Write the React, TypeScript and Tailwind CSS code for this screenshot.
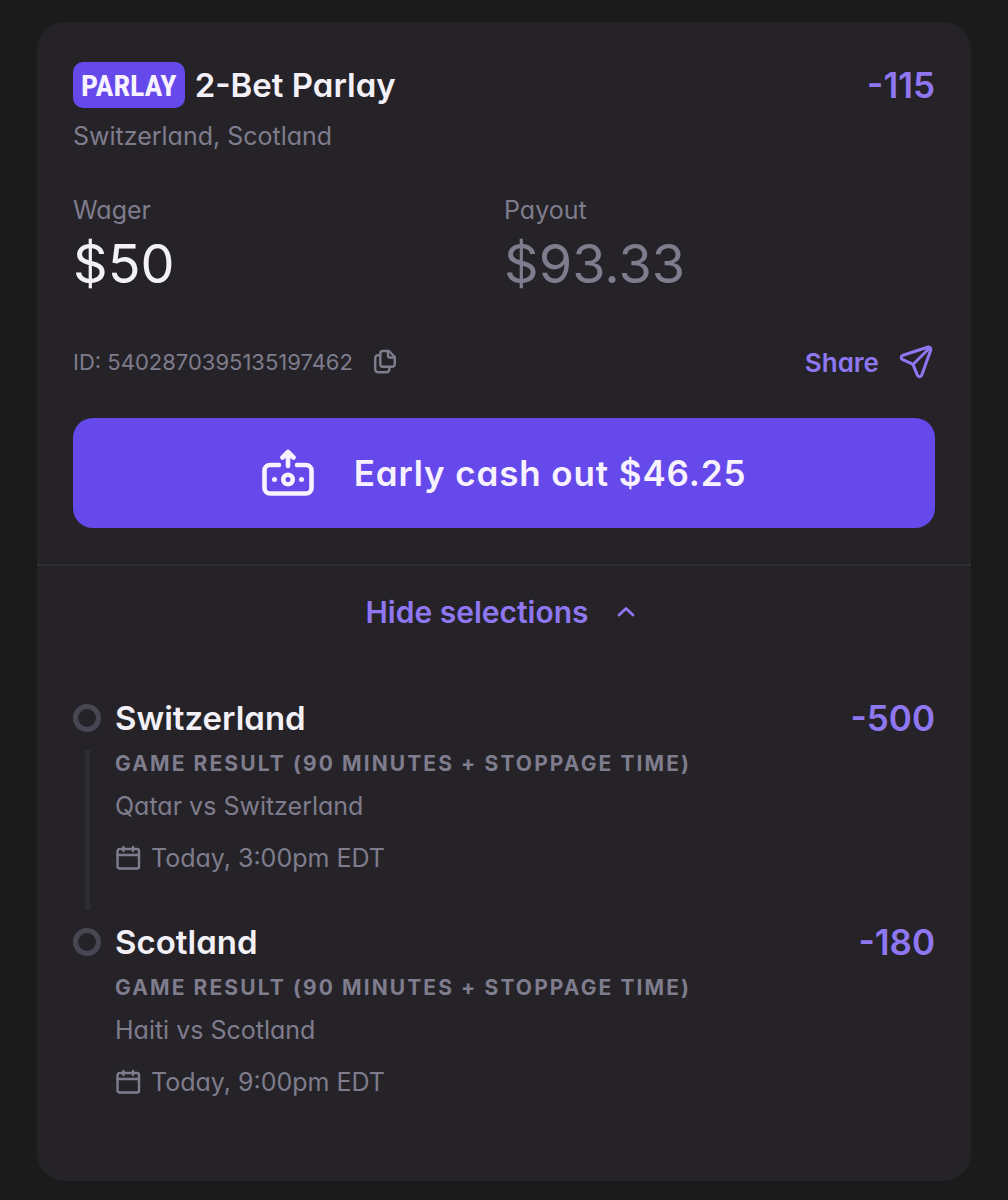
import React from "react";

type Selection = {
  name: string;
  odds: string;
  match: string;
  time: string;
};

const selections: Selection[] = [
  { name: "Switzerland", odds: "-500", match: "Qatar vs Switzerland", time: "Today, 3:00pm EDT" },
  { name: "Scotland", odds: "-180", match: "Haiti vs Scotland", time: "Today, 9:00pm EDT" },
];

function CopyIcon() {
  return (
    <svg width="24" height="26" viewBox="0 0 24 26" fill="none" stroke="currentColor" strokeWidth="2.4" strokeLinejoin="round" strokeLinecap="round" aria-hidden="true">
      <path d="M9.8 2H16L21.800 8V15.200A2.500 2.500 0 0 1 19.300 17.700H9.800A2.500 2.500 0 0 1 7.300 15.200V4.500A2.500 2.500 0 0 1 9.800 2Z" />
      <path d="M15 2.400V6.500A2 2 0 0 0 17 8.500H21.400" />
      <path d="M7.300 6.300H5A2.800 2.800 0 0 0 2.200 9.100V20.400A2.800 2.800 0 0 0 5 23.200H13.500A2.800 2.800 0 0 0 16.300 20.400V17.700" />
    </svg>
  );
}

function ShareIcon() {
  return (
    <svg width="36" height="34" viewBox="0 0 36 34" fill="none" stroke="currentColor" strokeWidth="3" strokeLinejoin="round" strokeLinecap="round" aria-hidden="true">
      <path d="M28.500 2.200L4 10.200C1.600 11.100 1.600 13.700 3.800 14.700L12.500 18.600C13.400 19 14 19.500 14.300 20.400L18.400 30.200C19.300 32.300 22 32.300 22.800 30.100L31.700 5.200C32.300 3.200 30.500 1.500 28.500 2.200Z" />
      <path d="M14.200 19.300L30.600 3" />
    </svg>
  );
}

function CashOutIcon() {
  return (
    <svg width="52" height="48" viewBox="0 0 52 48" fill="none" stroke="currentColor" strokeWidth="4.600" strokeLinejoin="round" strokeLinecap="round" aria-hidden="true">
      <path d="M17 16H8A5.500 5.500 0 0 0 2.500 21.500V39A5.500 5.500 0 0 0 8 44.500H44A5.500 5.500 0 0 0 49.500 39V21.500A5.500 5.500 0 0 0 44 16H35" />
      <path d="M26 17V4M20.500 8.500L26 3L31.500 8.500" />
      <circle cx="26" cy="30.500" r="4.800" />
      <circle cx="12.500" cy="30.500" r="2.500" fill="currentColor" stroke="none" />
      <circle cx="39.500" cy="30.500" r="2.500" fill="currentColor" stroke="none" />
    </svg>
  );
}

function ChevronUpIcon() {
  return (
    <svg width="18" height="12" viewBox="0 0 18 12" fill="none" stroke="currentColor" strokeWidth="2.800" strokeLinejoin="round" strokeLinecap="round" aria-hidden="true">
      <path d="M2 9L9 2.500L16 9" />
    </svg>
  );
}

function CalendarIcon() {
  return (
    <svg width="26" height="26" viewBox="0 0 26 26" fill="none" stroke="currentColor" strokeWidth="2.400" strokeLinejoin="round" strokeLinecap="round" aria-hidden="true">
      <rect x="2.500" y="4" width="21.500" height="19.500" rx="2" />
      <path d="M2.500 10H24M8.500 2V6M18 2V6" />
    </svg>
  );
}

function SelectionRow({ item, last }: { item: Selection; last: boolean }) {
  return (
    <li className={last ? "flex gap-3.5" : "flex gap-3.5 pb-11"}>
      <div className="flex w-7 shrink-0 flex-col items-center pt-2">
        <span className="size-7 rounded-full border-5 border-[#474652]" />
        {!last && <span className="mt-[18px] -mb-[34px] w-[5px] grow bg-[#2e2d33]" />}
      </div>
      <div className="min-w-0 grow">
        <div className="flex items-center justify-between leading-11">
          <h3 className="text-[33px] font-semibold text-[#f3f0f8]">{item.name}</h3>
          <span className="text-[35px] font-semibold text-[#8f77f2]">{item.odds}</span>
        </div>
        <p className="mt-2 text-[21px] leading-8 font-bold tracking-widest uppercase">
          Game result (90 minutes + stoppage time)
        </p>
        <p className="mt-2 text-[25px] leading-9">{item.match}</p>
        <p className="mt-4 flex items-center gap-2.5 text-[25px] leading-9">
          <CalendarIcon />
          {item.time}
        </p>
      </div>
    </li>
  );
}

export default function App() {
  return (
    <main className="min-h-screen bg-[#1b1b1c] px-[37px] pt-[22px] pb-5 font-['Inter',sans-serif] text-[#7f7c8d] [font-feature-settings:'cv11']">
      <article className="rounded-[28px] bg-[#252328]">
        <section className="px-9 pt-10 pb-9">
          <header className="flex items-center justify-between">
            <div className="flex items-center gap-2.5">
              <span className="flex h-[46px] items-center rounded-[10px] bg-[#6549ea] px-2 font-['Liberation_Sans_Narrow','Roboto_Condensed','Roboto',sans-serif] text-[30px] font-bold text-[#f8f2ff]">
                PARLAY
              </span>
              <h2 className="text-[33px] leading-11 font-semibold text-[#f3f0f8]">2-Bet Parlay</h2>
            </div>
            <span className="text-[35px] leading-11 font-semibold text-[#8f77f2]">-115</span>
          </header>
          <p className="mt-2 text-[25px] leading-10">Switzerland, Scotland</p>

          <dl className="mt-9 grid grid-cols-2">
            <div>
              <dt className="text-[25px] leading-9">Wager</dt>
              <dd className="mt-1 text-[54px] leading-16 text-[#f3f0f8]">$50</dd>
            </div>
            <div>
              <dt className="text-[25px] leading-9">Payout</dt>
              <dd className="mt-1 text-[54px] leading-16">$93.33</dd>
            </div>
          </dl>

          <div className="mt-[42px] flex h-12 items-center justify-between">
            <div className="flex items-center gap-5">
              <span className="text-[22px]">ID: 5402870395135197462</span>
              <button type="button" aria-label="Copy bet ID">
                <CopyIcon />
              </button>
            </div>
            <button type="button" className="flex items-center gap-5 text-[26px] font-semibold text-[#8f77f2]">
              Share
              <ShareIcon />
            </button>
          </div>

          <button
            type="button"
            className="mt-8 flex h-[110px] w-full items-center justify-center gap-10 rounded-[20px] bg-[#6549ea] text-[35px] font-semibold tracking-wide text-[#f8f2ff]"
          >
            <CashOutIcon />
            Early cash out $46.25
          </button>
        </section>

        <section className="border-t-2 border-[#2e2d33] px-9 pb-[81px]">
          <button
            type="button"
            aria-expanded="true"
            className="flex h-[92px] w-full items-center justify-center gap-7 pr-2 text-[30px] font-semibold text-[#8f77f2]"
          >
            Hide selections
            <ChevronUpIcon />
          </button>
          <ul className="pt-[38px]">
            {selections.map((item, i) => (
              <SelectionRow key={item.name} item={item} last={i === selections.length - 1} />
            ))}
          </ul>
        </section>
      </article>
    </main>
  );
}
